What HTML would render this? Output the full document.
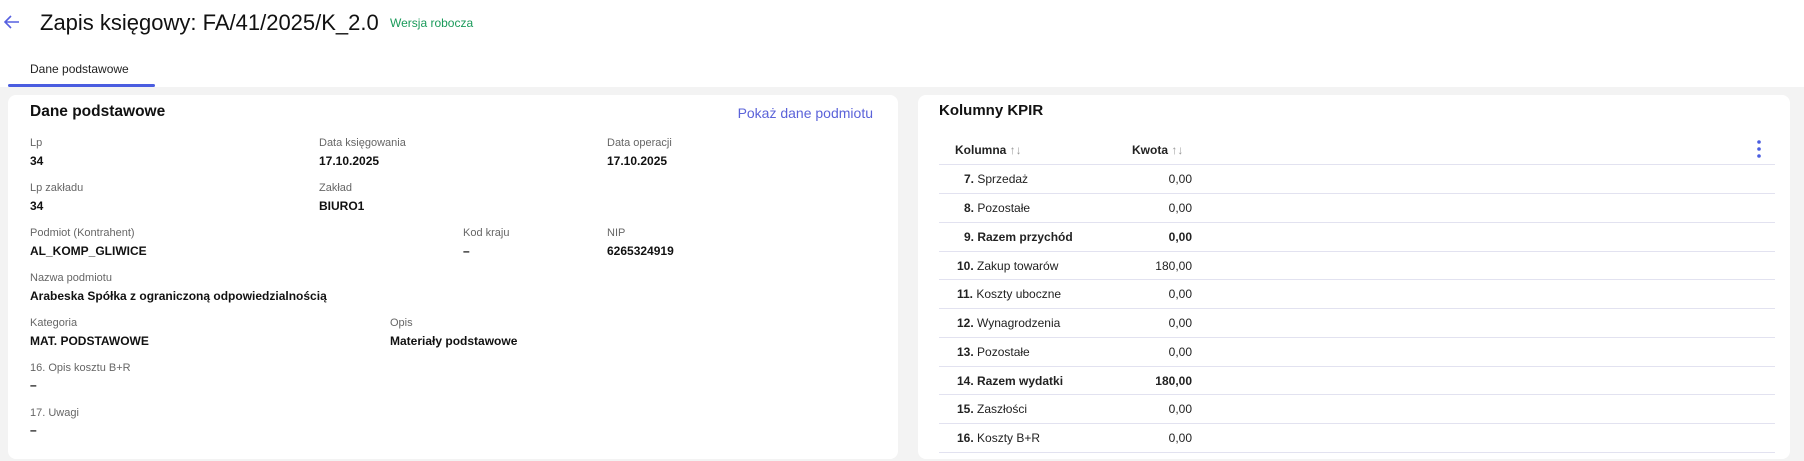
<!DOCTYPE html>
<html><head><meta charset="utf-8"><style>
*{margin:0;padding:0;box-sizing:border-box}
body{width:1804px;height:461px;background:#fff;font-family:"Liberation Sans",Arial,sans-serif;color:#111;position:relative;overflow:hidden}
.a{position:absolute;white-space:nowrap}
.bg{position:absolute;left:0;top:87px;width:1804px;height:374px;background:#f3f3f3}
.card{position:absolute;background:#fff;border-radius:8px}
.l{font-size:11px;color:#666}
.v{font-size:12px;font-weight:bold;color:#111}
.line{position:absolute;left:939px;width:836px;height:1px;background:#e2e2f0}
.n{position:absolute;font-size:12px;color:#222}
.n b{font-weight:bold}
.amt{position:absolute;left:1100px;width:92px;text-align:right;font-size:12px;color:#222}
</style></head><body>
<svg class="a" style="left:2px;top:14px" width="19" height="16" viewBox="0 0 19 16"><path d="M17 8H3M9 2L3 8l6 6" fill="none" stroke="#5660e0" stroke-width="1.6"/></svg>
<div class="a" style="left:40px;top:10px;font-size:22px;color:#111">Zapis księgowy: FA/41/2025/K_2.0</div>
<div class="a" style="left:390px;top:16px;font-size:12px;color:#1a9a5a">Wersja robocza</div>
<div class="a" style="left:30px;top:62px;font-size:12px;color:#222">Dane podstawowe</div>
<div class="a" style="left:8px;top:84px;width:147px;height:3px;background:#4a5de0;border-radius:2px"></div>
<div class="bg"></div>
<div class="card" style="left:8px;top:95px;width:890px;height:364px"></div>
<div class="card" style="left:918px;top:95px;width:872px;height:364px"></div>

<div class="a" style="left:30px;top:103px;font-size:15.5px;font-weight:bold;color:#111">Dane podstawowe</div>
<div class="a" style="left:733px;top:105px;width:140px;text-align:right;font-size:14px;color:#5b63d9">Pokaż dane podmiotu</div>

<div class="a l" style="left:30px;top:137px">Lp</div><div class="a v" style="left:30px;top:154px">34</div>
<div class="a l" style="left:319px;top:137px">Data księgowania</div><div class="a v" style="left:319px;top:154px">17.10.2025</div>
<div class="a l" style="left:607px;top:137px">Data operacji</div><div class="a v" style="left:607px;top:154px">17.10.2025</div>

<div class="a l" style="left:30px;top:182px">Lp zakładu</div><div class="a v" style="left:30px;top:199px">34</div>
<div class="a l" style="left:319px;top:182px">Zakład</div><div class="a v" style="left:319px;top:199px">BIURO1</div>

<div class="a l" style="left:30px;top:227px">Podmiot (Kontrahent)</div><div class="a v" style="left:30px;top:244px">AL_KOMP_GLIWICE</div>
<div class="a l" style="left:463px;top:227px">Kod kraju</div><div class="a v" style="left:463px;top:244px">–</div>
<div class="a l" style="left:607px;top:227px">NIP</div><div class="a v" style="left:607px;top:244px">6265324919</div>

<div class="a l" style="left:30px;top:272px">Nazwa podmiotu</div><div class="a v" style="left:30px;top:289px">Arabeska Spółka z ograniczoną odpowiedzialnością</div>

<div class="a l" style="left:30px;top:317px">Kategoria</div><div class="a v" style="left:30px;top:334px">MAT. PODSTAWOWE</div>
<div class="a l" style="left:390px;top:317px">Opis</div><div class="a v" style="left:390px;top:334px">Materiały podstawowe</div>

<div class="a l" style="left:30px;top:362px">16. Opis kosztu B+R</div><div class="a v" style="left:30px;top:378px">–</div>
<div class="a l" style="left:30px;top:407px">17. Uwagi</div><div class="a v" style="left:30px;top:423px">–</div>

<div class="a" style="left:939px;top:102px;font-size:15px;font-weight:bold;color:#111">Kolumny KPIR</div>
<div class="a" style="left:955px;top:143px;font-size:12px;font-weight:bold;color:#222">Kolumna <span style="color:#999;font-weight:normal">↑↓</span></div>
<div class="a" style="left:1132px;top:143px;font-size:12px;font-weight:bold;color:#222">Kwota <span style="color:#999;font-weight:normal">↑↓</span></div>
<svg class="a" style="left:1756px;top:139px" width="6" height="20"><circle cx="3" cy="3" r="1.8" fill="#4a5de0"/><circle cx="3" cy="10" r="1.8" fill="#4a5de0"/><circle cx="3" cy="17" r="1.8" fill="#4a5de0"/></svg>

<div class="line" style="top:164px"></div>
<div class="line" style="top:193px"></div>
<div class="line" style="top:222px"></div>
<div class="line" style="top:251px"></div>
<div class="line" style="top:279px"></div>
<div class="line" style="top:308px"></div>
<div class="line" style="top:337px"></div>
<div class="line" style="top:366px"></div>
<div class="line" style="top:394px"></div>
<div class="line" style="top:423px"></div>
<div class="line" style="top:452px"></div>

<div class="n" style="left:964px;top:172px"><b>7.</b> Sprzedaż</div><div class="amt" style="top:172px">0,00</div>
<div class="n" style="left:964px;top:201px"><b>8.</b> Pozostałe</div><div class="amt" style="top:201px">0,00</div>
<div class="n" style="left:964px;top:230px"><b>9. Razem przychód</b></div><div class="amt" style="top:230px;font-weight:bold">0,00</div>
<div class="n" style="left:957px;top:259px"><b>10.</b> Zakup towarów</div><div class="amt" style="top:259px">180,00</div>
<div class="n" style="left:957px;top:287px"><b>11.</b> Koszty uboczne</div><div class="amt" style="top:287px">0,00</div>
<div class="n" style="left:957px;top:316px"><b>12.</b> Wynagrodzenia</div><div class="amt" style="top:316px">0,00</div>
<div class="n" style="left:957px;top:345px"><b>13.</b> Pozostałe</div><div class="amt" style="top:345px">0,00</div>
<div class="n" style="left:957px;top:374px"><b>14. Razem wydatki</b></div><div class="amt" style="top:374px;font-weight:bold">180,00</div>
<div class="n" style="left:957px;top:402px"><b>15.</b> Zaszłości</div><div class="amt" style="top:402px">0,00</div>
<div class="n" style="left:957px;top:431px"><b>16.</b> Koszty B+R</div><div class="amt" style="top:431px">0,00</div>
</body></html>
